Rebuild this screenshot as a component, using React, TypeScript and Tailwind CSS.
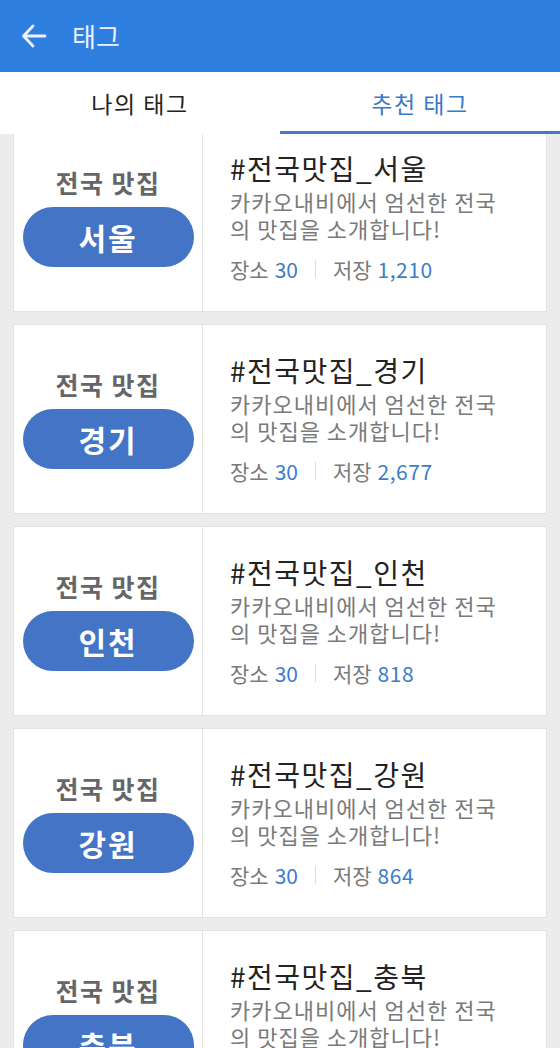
import React from "react";

const items = [
  { region: "서울", saved: "1,210" },
  { region: "경기", saved: "2,677" },
  { region: "인천", saved: "818" },
  { region: "강원", saved: "864" },
  { region: "충북", saved: "1,024" },
];

function Card({ region, saved }: { region: string; saved: string }) {
  return (
    <div className="flex h-[190px] shrink-0 bg-white border border-[#e2e2e2]">
      <div className="w-[189px] shrink-0 border-r border-[#e2e2e2] flex flex-col items-center justify-center">
        <div className="text-[25px] leading-[30px] font-semibold text-[#666666] tracking-[1.5px]">전국 맛집</div>
        <div className="mt-[10px] w-[171px] h-[60px] rounded-full bg-[#4474c6] flex items-center justify-center">
          <span className="text-[30px] font-bold text-white leading-none tracking-[2px]">{region}</span>
        </div>
      </div>
      <div className="flex-1 flex flex-col justify-center pl-[27px]">
        <div className="text-[28px] leading-[30px] text-[#222222] tracking-[1.5px]">#전국맛집_{region}</div>
        <div className="text-[22px] leading-[27px] text-[#7a7a7a] mt-[5px] tracking-[1px]">
          카카오내비에서 엄선한 전국
          <br />의 맛집을 소개합니다!
        </div>
        <div className="flex items-center text-[21px] leading-[26px] mt-[14px]">
          <span className="text-[#7a7a7a]">장소</span>
          <span className="text-[#3d7dc8] ml-[6px]">30</span>
          <span className="w-px h-[18px] bg-[#dddddd] mx-[17px]" />
          <span className="text-[#7a7a7a]">저장</span>
          <span className="text-[#3d7dc8] ml-[6px] tracking-[0.5px]">{saved}</span>
        </div>
      </div>
    </div>
  );
}

export default function App() {
  return (
    <div
      className="w-[560px] h-[1048px] overflow-hidden bg-[#ececec] flex flex-col"
      style={{ fontFamily: '"Noto Sans CJK KR", "Noto Sans", sans-serif' }}
    >
      <div className="h-[72px] shrink-0 bg-[#2f7fe1] flex items-center pl-[20px]">
        <svg width="28" height="28" viewBox="0 0 28 28" fill="none" stroke="#eef4ff" strokeWidth="2.8" strokeLinecap="round" strokeLinejoin="round">
          <path d="M25 14H4" />
          <path d="M13 4L3.5 14L13 24" />
        </svg>
        <span className="ml-[24px] text-[26px] text-[#eaf2ff] leading-none">태그</span>
      </div>
      <div className="h-[62px] shrink-0 bg-white flex relative z-10">
        <div className="flex-1 flex items-center justify-center text-[23px] text-[#222222] tracking-[1.5px]">나의 태그</div>
        <div className="flex-1 flex items-center justify-center text-[23px] text-[#3a78c8] tracking-[1.5px] border-b-[3px] border-[#4a78c0] pt-[3px]">추천 태그</div>
      </div>
      <div className="flex-1 overflow-hidden">
        <div className="flex flex-col gap-[12px] px-[13px] mt-[-12px]">
          {items.map((it) => (
            <Card key={it.region} region={it.region} saved={it.saved} />
          ))}
        </div>
      </div>
    </div>
  );
}
